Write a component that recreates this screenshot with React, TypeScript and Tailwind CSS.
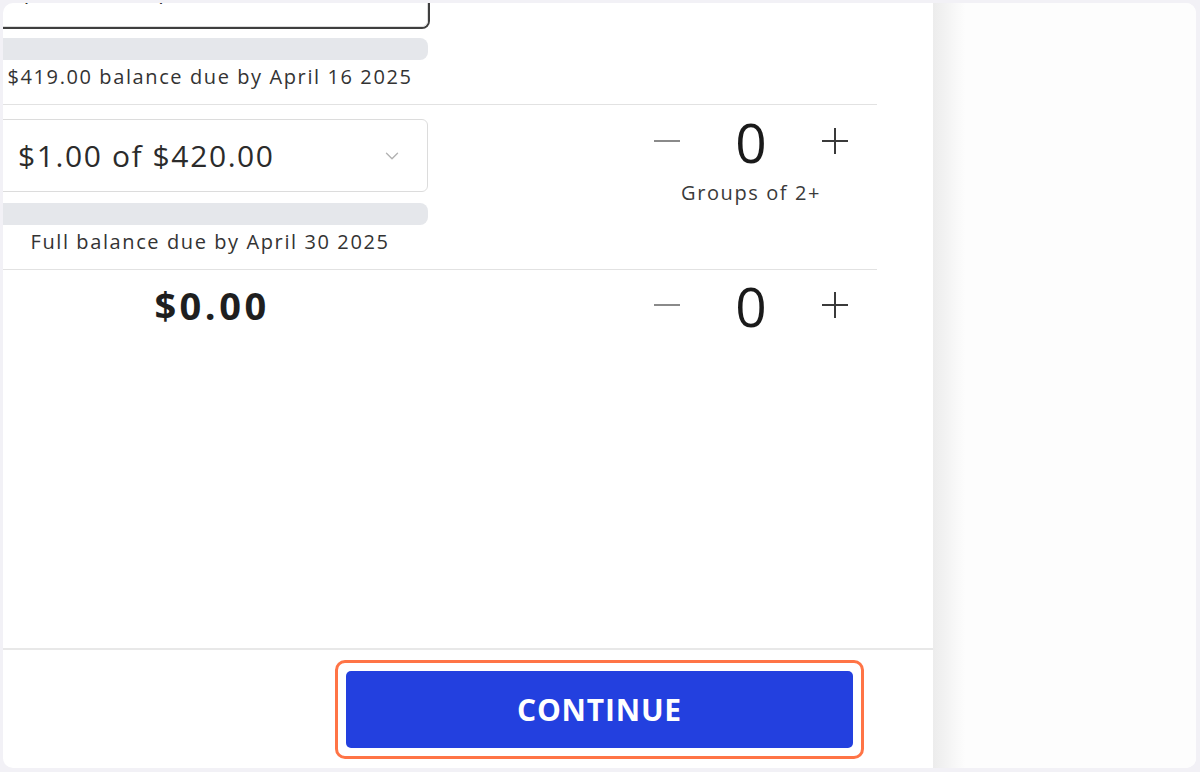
import { ChevronDown } from "lucide-react";

const font = { fontFamily: '"Open Sans", "Noto Sans", sans-serif' };

function Minus() {
  return (
    <svg width="28" height="4" viewBox="0 0 28 4">
      <line x1="1" y1="2" x2="27" y2="2" stroke="#8a8a8a" strokeWidth="2" />
    </svg>
  );
}

function Plus() {
  return (
    <svg width="28" height="28" viewBox="0 0 28 28">
      <line x1="1" y1="14" x2="27" y2="14" stroke="#3a3a3a" strokeWidth="2" />
      <line x1="14" y1="1" x2="14" y2="27" stroke="#3a3a3a" strokeWidth="2" />
    </svg>
  );
}

function Counter({ label }: { label?: string }) {
  return (
    <div className="ml-auto mr-[15px] w-[222px] flex flex-col items-center">
      <div className="flex items-center h-[52px] w-full">
        <div className="w-[54px] flex justify-center">
          <Minus />
        </div>
        <div className="flex-1 text-center text-[55px] leading-none text-[#1a1a1a]">0</div>
        <div className="w-[54px] flex justify-center">
          <Plus />
        </div>
      </div>
      {label && (
        <div className="mt-[14px] text-[20px] leading-6 tracking-[1.6px] text-[#3a3a3a]">{label}</div>
      )}
    </div>
  );
}

function PlanRow({ note, focused }: { note: string; focused?: boolean }) {
  return (
    <div className="flex pt-[14px] pb-[15px] border-b border-[#e2e2e2]">
      <div className="w-[436px] flex flex-col">
        <div
          className={
            "h-[73px] rounded-[6px] border border-[#dcdcdc] flex items-center pl-[25px] pr-[24px] " +
            (focused ? "ring-2 ring-[#3f3f3f] rounded-[5px]" : "")
          }
        >
          <span className="flex-1 text-[30px] tracking-[1.6px] text-[#2b2b2b]">$1.00 of $420.00</span>
          <ChevronDown size={22} strokeWidth={1.5} color="#b3b3b3" />
        </div>
        <div className="mt-[11px] h-[22px] rounded-[8px] bg-[#e5e7eb]" />
        <div className="mt-[5px] text-center text-[20px] leading-6 tracking-[1.6px] text-[#333]">{note}</div>
      </div>
      <div className="flex-1 flex -mt-[4px]">
        {!focused && <Counter label="Groups of 2+" />}
      </div>
    </div>
  );
}

export default function App() {
  return (
    <div className="w-[1200px] h-[772px] bg-[#f2f1f6] pt-[3px] pl-[3px] pr-[4px] pb-[4px]" style={font}>
      <div className="h-full rounded-[10px] bg-white flex overflow-hidden">
        <div className="w-[930px] flex flex-col">
          <div className="flex-1 overflow-hidden">
            <div className="-mt-[63px] -ml-[11px] mr-[56px]">
              <PlanRow note="$419.00 balance due by April 16 2025" focused />
              <PlanRow note="Full balance due by April 30 2025" />
              <div className="flex pt-[14px]">
                <div className="w-[436px] -mt-[7px] pl-[4px] text-center text-[38px] font-bold tracking-[3.5px] text-[#1f1f1f]">
                  $0.00
                </div>
                <div className="flex-1 flex -mt-[5px]">
                  <Counter />
                </div>
              </div>
            </div>
          </div>
          <div className="h-[120px] border-t-2 border-[#e8e8e8] flex justify-end items-center pr-[69px]">
            <div className="w-[529px] h-[99px] rounded-[10px] border-[3px] border-[#ff7446] p-[8px]">
              <button className="w-full h-full rounded-[5px] bg-[#2340df] text-white text-[30px] font-bold tracking-[0.8px]">
                CONTINUE
              </button>
            </div>
          </div>
        </div>
        <div className="flex-1 bg-[#fdfdfd] flex">
          <div className="w-[32px] h-full bg-gradient-to-r from-[#ececec] to-[#fdfdfd]" />
        </div>
      </div>
    </div>
  );
}
